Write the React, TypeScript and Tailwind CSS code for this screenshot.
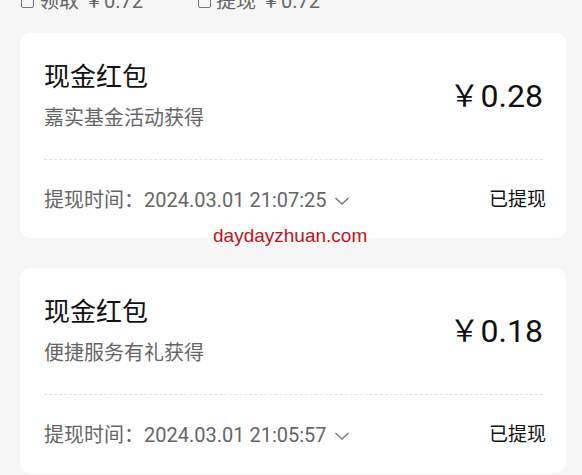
import React from "react";

const records = [
  { title: "现金红包", source: "嘉实基金活动获得", amount: "0.28", time: "2024.03.01 21:07:25", status: "已提现" },
  { title: "现金红包", source: "便捷服务有礼获得", amount: "0.18", time: "2024.03.01 21:05:57", status: "已提现" },
];

function Chevron() {
  return (
    <svg width="16" height="14" viewBox="0 0 16 14" className="ml-[7px] mt-[2px]">
      <path d="M1.5 4 L8 10 L14.5 4" fill="none" stroke="#777" strokeWidth="1.4" />
    </svg>
  );
}

function Box() {
  return <span className="inline-block w-[13px] h-[14px] border-[1.6px] border-[#777] rounded-[2px] mr-[5px]" />;
}

export default function App() {
  return (
    <div
      className="w-[582px] h-[475px] overflow-hidden bg-[#f6f6f6] relative"
      style={{ fontFamily: 'Roboto, "Noto Sans CJK SC", sans-serif' }}
    >
      {/* summary row, cut off at the top */}
      <div className="-mt-[13px] h-[28px] flex items-center pl-[21px] text-[20px] text-[#666]">
        <div className="flex items-center w-[177px]">
          <Box />
          <span>领取 ￥0.72</span>
        </div>
        <div className="flex items-center">
          <Box />
          <span>提现 ￥0.72</span>
        </div>
      </div>

      <div className="mt-[18px] pl-5 pr-4 flex flex-col gap-[30px]">
        {records.map((r, i) => (
          <div key={i} className="bg-white rounded-[10px] pl-6 pr-[23px] pt-[26px] pb-[24px]">
            <div className="flex items-center justify-between">
              <div className="flex flex-col">
                <span className="text-[26px] leading-[36px] text-[#111]">{r.title}</span>
                <span className="mt-[9px] text-[20px] leading-[28px] text-[#666]">{r.source}</span>
              </div>
              <span className="flex items-center text-[32px] leading-[40px] text-[#111]">
                <span className="text-[30px]">￥</span>
                <span className="ml-[1px]">{r.amount}</span>
              </span>
            </div>
            <div className="mt-[27px] border-t border-dashed border-[#e4e4e4]" />
            <div className="mt-[26px] h-[28px] flex items-center justify-between">
              <div className="flex items-center text-[20px] text-[#666]">
                <span>提现时间：</span>
                <span>{r.time}</span>
                <Chevron />
              </div>
              <span className="text-[19px] text-[#111] mr-[-3px]">{r.status}</span>
            </div>
          </div>
        ))}
      </div>

      <span
        className="absolute left-[213px] top-[223px] text-[19px] leading-[26px] text-[#c0121c]"
        style={{ fontFamily: '"Liberation Sans", Arial, sans-serif' }}
      >
        daydayzhuan.com
      </span>
    </div>
  );
}
